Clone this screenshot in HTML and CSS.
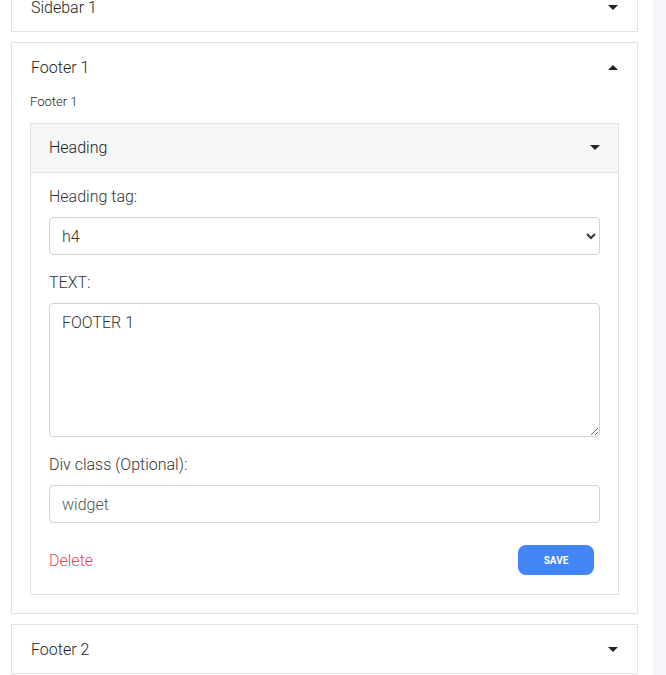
FILE: index.html
```html
<!DOCTYPE html>
<html lang="en">
<head>
    <meta charset="UTF-8">
    <meta name="viewport" content="width=device-width, initial-scale=1.0">
    <title>Widget Areas</title>
    <link rel="stylesheet" href="styles.css">
</head>
<body>
    <div class="page">
        <main class="areas">
            <section class="area area-first">
                <div class="area-head">
                    <span>Sidebar 1</span>
                    <span class="caret"></span>
                </div>
            </section>

            <section class="area">
                <div class="area-head">
                    <span>Footer 1</span>
                    <span class="caret up"></span>
                </div>
                <div class="area-body">
                    <p class="area-name">Footer 1</p>

                    <div class="widget">
                        <div class="widget-head">
                            <span>Heading</span>
                            <span class="caret"></span>
                        </div>
                        <div class="widget-body">
                            <div class="field">
                                <label for="tag">Heading tag:</label>
                                <select id="tag">
                                    <option>h1</option>
                                    <option>h2</option>
                                    <option>h3</option>
                                    <option selected>h4</option>
                                    <option>h5</option>
                                    <option>h6</option>
                                </select>
                            </div>
                            <div class="field">
                                <label for="text">TEXT:</label>
                                <textarea id="text">FOOTER 1</textarea>
                            </div>
                            <div class="field">
                                <label for="divClass">Div class (Optional):</label>
                                <input type="text" id="divClass" value="widget">
                            </div>
                            <div class="actions">
                                <a href="#" class="delete">Delete</a>
                                <button class="save">SAVE</button>
                            </div>
                        </div>
                    </div>
                </div>
            </section>

            <section class="area">
                <div class="area-head">
                    <span>Footer 2</span>
                    <span class="caret"></span>
                </div>
            </section>
        </main>
        <aside class="strip"></aside>
    </div>
</body>
</html>
```

FILE: styles.css
```css
* { margin: 0; padding: 0; box-sizing: border-box; }
html, body { height: 100%; overflow: hidden; }
body {
    font-family: Roboto, "Liberation Sans", sans-serif;
    font-size: 16px; font-weight: 300; color: #222; background: #fff;
}
.page { display: flex; height: 100%; }
.areas { width: 653px; padding: 0 15px 0 11px; }
.strip { flex: 1; background: #f5f6fa; }

.area {
    border: 1px solid #e2e2e2; background: #fff;
    margin-bottom: 10px;
}
.area-first { margin-top: -18px; }
.area-head {
    height: 48px; padding: 0 19px;
    display: flex; align-items: center; justify-content: space-between;
}
.caret {
    width: 0; height: 0;
    border-left: 5px solid transparent;
    border-right: 5px solid transparent;
    border-top: 5px solid #222;
}
.caret.up { border-top: none; border-bottom: 5px solid #222; }

.area-body { padding: 0 18px 18px; }
.area-name { font-size: 13px; line-height: 20px; margin: 1px 0 11px; }

.widget { border: 1px solid #dee2e6; }
.widget-head {
    height: 49px; padding: 0 18px 1px;
    background: #f5f6f6; border-bottom: 1px solid #dee2e6;
    display: flex; align-items: center; justify-content: space-between;
}
.widget-body { padding: 14px 18px 19px; }

.field { margin-bottom: 18px; }
.field label { display: block; line-height: 20px; margin-bottom: 10px; color: #333; }
select, textarea, input {
    display: block; width: 100%;
    font-family: inherit; font-size: 16px; font-weight: 300; color: #333;
    border: 1px solid #ced4da; border-radius: 4px; background: #fff;
}
select { height: 38px; padding: 0 8px; }
textarea { height: 134px; padding: 8px 12px; resize: vertical; line-height: 22px; }
input { height: 38px; padding: 0 12px; color: #555; }

.actions {
    display: flex; align-items: center; justify-content: space-between;
    padding-top: 4px;
}
.delete { color: #f03e55; text-decoration: none; }
.save {
    width: 76px; height: 30px; margin-right: 6px;
    background: #4285f4; color: #fff; border: none; border-radius: 8px;
    font-family: inherit; font-size: 10px; font-weight: 700;
}
```
